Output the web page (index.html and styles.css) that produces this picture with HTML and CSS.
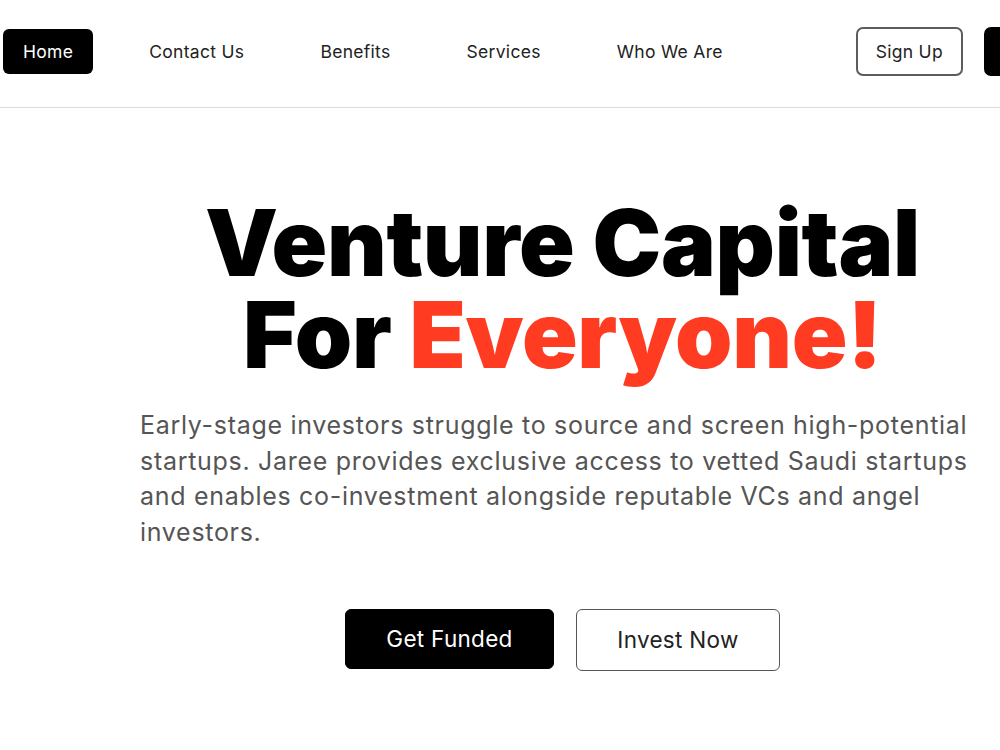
FILE: index.html
```html
<!DOCTYPE html>
<html lang="en">
<head>
    <meta charset="UTF-8">
    <title>Jaree</title>
    <link rel="stylesheet" href="styles.css">
</head>
<body>
    <header class="topbar">
        <nav class="nav">
            <a href="#" class="nav-link active">Home</a>
            <a href="#" class="nav-link">Contact Us</a>
            <a href="#" class="nav-link">Benefits</a>
            <a href="#" class="nav-link">Services</a>
            <a href="#" class="nav-link">Who We Are</a>
        </nav>
        <div class="auth">
            <a href="#" class="btn btn-outline">Sign Up</a>
            <a href="#" class="btn btn-dark">Log In</a>
        </div>
    </header>

    <section class="hero">
        <h1 class="hero-title">Venture Capital<br>For <span class="accent">Everyone!</span></h1>
        <p class="hero-text">Early-stage investors struggle to source and screen high-potential startups. Jaree provides exclusive access to vetted Saudi startups and enables co-investment alongside reputable VCs and angel investors.</p>
        <div class="hero-actions">
            <a href="#" class="cta cta-dark">Get Funded</a>
            <a href="#" class="cta cta-outline">Invest Now</a>
        </div>
    </section>
</body>
</html>
```

FILE: styles.css
```css
/*reset*/
* {
    padding: 0;
    margin: 0;
    box-sizing: border-box;
}
a {
    text-decoration: none;
    color: inherit;
}

/*default*/
html, body {
    overflow-x: hidden;
}
body {
    font: 17.5px/1.2 "Inter", "Liberation Sans", sans-serif;
    letter-spacing: 0.3px;
    color: #222;
    background: #fff;
}

/*header*/
.topbar {
    display: flex;
    align-items: center;
    width: 1120px;
    height: 108px;
    padding: 0 0 4px 3px;
    border-bottom: 1px solid #dcdcdc;
}
.nav {
    display: flex;
    align-items: center;
    gap: 36px;
}
.nav-link {
    padding: 12px 20px;
    border-radius: 6px;
}
.nav-link.active {
    background: #000;
    color: #fff;
}
.auth {
    display: flex;
    gap: 21px;
    margin-left: 113px;
}
.btn {
    display: block;
    width: 107px;
    height: 49px;
    line-height: 45px;
    text-align: center;
    border: 2px solid #5c5c5c;
    border-radius: 7px;
}
.btn-dark {
    background: #000;
    border-color: #000;
    color: #fff;
}

/*hero*/
.hero {
    width: 845px;
    margin-left: 140px;
    padding-top: 89px;
}
.hero-title {
    text-align: center;
    font-family: "Inter", sans-serif;
    font-weight: 900;
    font-size: 92px;
    line-height: 92px;
    letter-spacing: -0.3px;
    color: #000;
}
.accent {
    color: #ff3b22;
}
.hero-text {
    margin-top: 27px;
    font-size: 25px;
    line-height: 35.5px;
    letter-spacing: 0.7px;
    color: #555;
}
.hero-actions {
    display: flex;
    justify-content: center;
    gap: 22px;
    margin-top: 59px;
}
.cta {
    display: block;
    width: 209px;
    height: 60px;
    line-height: 58px;
    text-align: center;
    font-size: 22.5px;
    border: 1px solid #555;
    border-radius: 6px;
}
.cta-dark {
    background: #000;
    border-color: #000;
    color: #fff;
}
.cta-outline {
    width: 204px;
    height: 62px;
    line-height: 60px;
}
```
